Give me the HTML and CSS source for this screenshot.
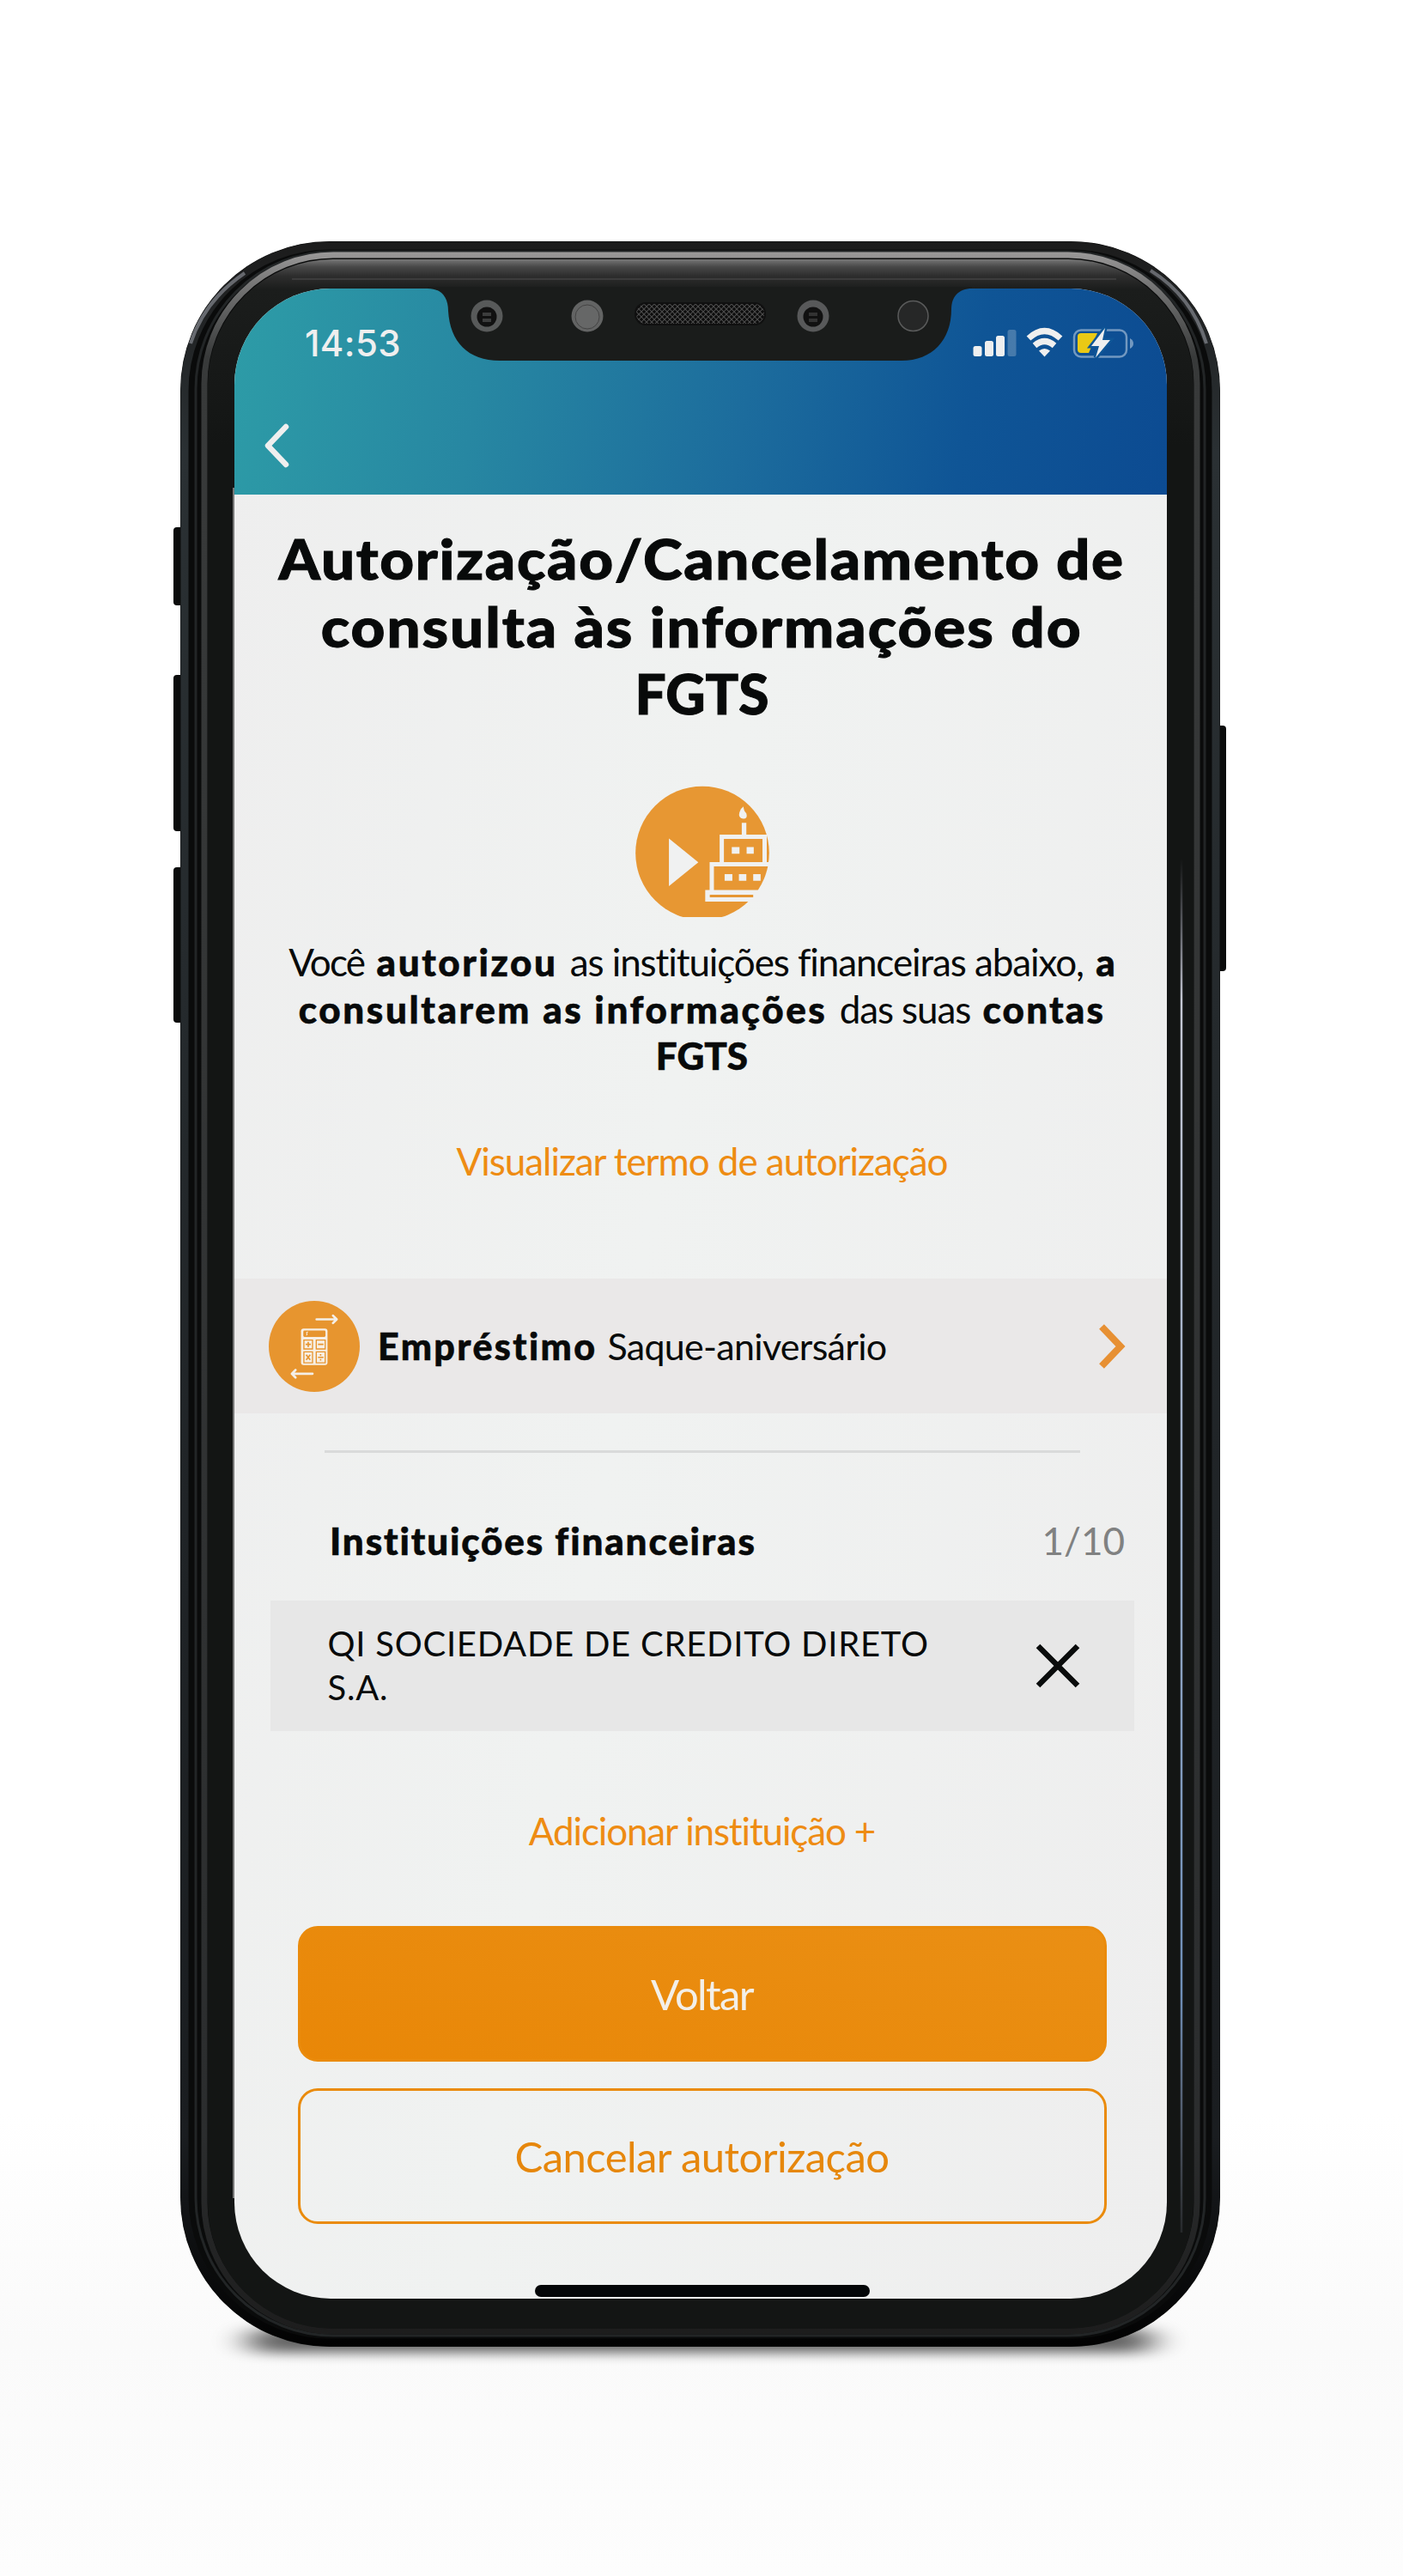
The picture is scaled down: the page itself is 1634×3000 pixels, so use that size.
FILE: index.html
```html
<!DOCTYPE html>
<html lang="pt-BR">
<head>
<meta charset="utf-8">
<title>Autorização FGTS</title>
<link rel="stylesheet" href="styles.css">
</head>
<body>
<div class="stage">
  <svg class="device" width="1634" height="3000" viewBox="0 0 1634 3000" aria-hidden="true">
    <defs>
      <linearGradient id="top" x1="0" y1="302" x2="0" y2="520" gradientUnits="userSpaceOnUse">
        <stop offset="0" stop-color="#777"/><stop offset=".04" stop-color="#484848"/><stop offset=".09" stop-color="#2d2d2d"/><stop offset=".16" stop-color="#1b1d1c"/><stop offset="1" stop-color="#131514"/>
      </linearGradient>
      <linearGradient id="rim" x1="0" y1="281" x2="0" y2="2733" gradientUnits="userSpaceOnUse">
        <stop offset="0" stop-color="#a6a4a4"/><stop offset=".02" stop-color="#777"/><stop offset=".055" stop-color="#383a3a"/><stop offset=".9" stop-color="#2b2d2e"/><stop offset="1" stop-color="#1c1c1c"/>
      </linearGradient>
      <linearGradient id="shell" x1="0" y1="281" x2="0" y2="2733" gradientUnits="userSpaceOnUse">
        <stop offset="0" stop-color="#1c1c1c"/><stop offset=".1" stop-color="#2a3033"/><stop offset=".9" stop-color="#1a1d20"/><stop offset="1" stop-color="#020202"/>
      </linearGradient>
      <linearGradient id="glint" x1="0" y1="1000" x2="0" y2="2650" gradientUnits="userSpaceOnUse">
        <stop offset="0" stop-color="#99a" stop-opacity="0"/><stop offset=".1" stop-color="#c5c8d4"/><stop offset=".8" stop-color="#6f8fb8"/><stop offset="1" stop-color="#99a" stop-opacity="0"/>
      </linearGradient>
      <pattern id="mesh" width="6" height="6" patternUnits="userSpaceOnUse"><rect width="6" height="6" fill="#0c0c0c"/><path d="M0 0L6 6M6 0L0 6" stroke="#4c4c4c" stroke-width="1.1"/></pattern>
      <filter id="soft" x="-20%" y="-200%" width="140%" height="500%"><feGaussianBlur stdDeviation="20 7"/></filter>
    </defs>
    <rect x="290" y="2712" width="1052" height="28" rx="14" fill="#000" opacity=".6" filter="url(#soft)"/>
    <g fill="#0b0c0c"><rect x="202" y="614" width="14" height="91" rx="4"/><rect x="202" y="786" width="14" height="182" rx="4"/><rect x="202" y="1010" width="14" height="181" rx="4"/><rect x="1414" y="845" width="14" height="286" rx="4"/></g>
    <rect x="210" y="281" width="1211" height="2452" rx="174" fill="#0a0b0b"/>
    <rect x="215" y="286" width="1201" height="2442" rx="169" fill="none" stroke="url(#shell)" stroke-width="9"/>
    <rect x="228" y="293" width="1175" height="2427" rx="160" fill="none" stroke="#222526" stroke-width="3"/>
    <rect x="238" y="297" width="1156" height="2418" rx="150" fill="none" stroke="url(#rim)" stroke-width="7"/>
    <rect x="242" y="302" width="1148" height="2410" rx="146" fill="url(#top)"/>
    <path d="M340 325H1300" stroke="#3c3c3c" stroke-width="2"/>
    <path d="M222 400Q238 350 285 318M1340 315Q1388 345 1405 400" fill="none" stroke="#aeb2bc" stroke-width="4" opacity=".5"/>
    <path d="M1376 1000V2600" stroke="url(#glint)" stroke-width="2.5"/>
    <path d="M272.500 568V2560" stroke="#777" stroke-width="3"/>
  </svg>

  <main class="screen">
    <header class="top">
      <div class="status">
        <span class="clock">14:53</span>
        <svg width="190" height="36" viewBox="1132 381 190 36">
          <g fill="#efefef"><rect x="1133.500" y="403" width="10" height="12" rx="2.500"/><rect x="1147" y="397" width="10" height="18" rx="2.500"/><rect x="1160" y="391" width="10" height="24" rx="2.500"/><rect x="1173.500" y="384" width="10" height="31" rx="2.500" opacity=".25"/></g>
          <g fill="none" stroke="#efefef" stroke-width="7"><path d="M1198 394Q1216.500 377 1235 394"/><path d="M1205 402.500Q1216.500 392.500 1228 402.500"/></g>
          <path d="M1210 408.500Q1216.500 403.500 1223 408.500L1216.500 415.500Z" fill="#efefef"/>
          <rect x="1251" y="384.500" width="61" height="31" rx="8" fill="none" stroke="#fff" stroke-opacity=".42" stroke-width="2.500"/>
          <path d="M1316 394Q1320 396 1320 400T1316 406Z" fill="#fff" opacity=".42"/>
          <path d="M1259 388H1278L1268 411H1259Q1255 411 1255 407V392Q1255 388 1259 388Z" fill="#eac915"/>
          <path d="M1287 382L1271 403H1280L1276 416.500L1293 396H1284Z" fill="#efefef" stroke="#0f5697" stroke-width="5" paint-order="stroke"/>
        </svg>
      </div>
      <svg class="back" width="32" height="52" viewBox="0 0 32 52"><path d="M27 4L6 26L27 48" fill="none" stroke="#efefef" stroke-width="6.500" stroke-linecap="round" stroke-linejoin="round"/></svg>
    </header>

    <h1 class="title">
      <span class="title-a">Autorização/Cancelamento de</span>
      <span class="title-b">consulta às informações do</span>
      <span>FGTS</span>
    </h1>

    <svg class="cake" width="156" height="153" viewBox="60 45 468 460">
      <circle cx="294" cy="281" r="234" fill="#e79733"/>
      <path d="M177 230L280 313L177 397Z" fill="#f0f1f1"/>
      <g fill="none" stroke="#f0f1f1" stroke-width="15"><path d="M362 320V224H512V314"/><path d="M327 415V320H530"/></g>
      <path d="M304 410H528V451H304Z" fill="#f0f1f1"/><path d="M320 431H472" stroke="#e79733" stroke-width="9"/>
      <path d="M432 220V175H448V220ZM438 118Q438 132 448 142Q454 161 437 161Q418 158 424 138Q428 124 438 118Z" fill="#f0f1f1"/>
      <path d="M397 260h27v23h-27zM449 260h25v23h-25zM372 355h27v23h-27zM422 355h26v23h-26zM472 355h26v23h-26z" fill="#f0f1f1"/>
    </svg>

    <p class="lead">
      <span class="line"><span class="voce">Você</span> <b class="wide">autorizou</b> <span class="tight">as instituições financeiras abaixo,</span> <b>a</b></span>
      <span class="line"><b class="wide">consultarem as informações</b> <span class="tight">das suas</span> <b class="contas">contas</b></span>
      <span class="line"><b>FGTS</b></span>
    </p>
    <a class="link terms">Visualizar termo de autorização</a>

    <section class="product">
      <svg width="106" height="106" viewBox="40 44 316 316">
        <circle cx="198" cy="202" r="158" fill="#e7952f"/>
        <g fill="none" stroke="#f4efe8" stroke-width="8" stroke-linecap="round" stroke-linejoin="round"><path d="M206 108H274M263 95L276 108L263 121"/><path d="M192 297H122M133 284L120 297L133 310"/></g>
        <rect x="152" y="140" width="92" height="127" rx="9" fill="#f7efe4"/>
        <rect x="160" y="147" width="77" height="22" rx="4" fill="#e7952f"/><path d="M176 152Q169 153 172 157T170 163" fill="none" stroke="#f7efe4" stroke-width="3"/>
        <g fill="none" stroke="#e7952f" stroke-width="4"><path d="M162 180h30v31h-30zM205 180h31v31h-31zM162 221h30v38h-30zM205 221h31v38h-31z"/><path d="M168 195h18M177 186v18M211 195h19M170 231l14 18M184 231l-14 18M211 240h19M220 229v5M220 246v5" stroke-width="5"/></g>
      </svg>
      <span class="product-name"><b>Empréstimo</b> <span>Saque-aniversário</span></span>
      <svg class="go" width="36" height="56" viewBox="0 0 36 56"><path d="M6 5L28 28L6 51" fill="none" stroke="#e79033" stroke-width="8"/></svg>
    </section>
    <hr class="rule">

    <div class="list-head"><b>Instituições financeiras</b><span class="count">1/10</span></div>
    <div class="bank">
      <span class="bank-name">QI SOCIEDADE DE CREDITO DIRETO<br>S.A.</span>
      <svg width="54" height="54" viewBox="0 0 54 54"><path d="M4 4L50 50M50 4L4 50" stroke="#0a0c0c" stroke-width="6.500"/></svg>
    </div>
    <a class="link add">Adicionar instituição +</a>

    <div class="actions">
      <button class="btn solid">Voltar</button>
      <button class="btn outline">Cancelar autorização</button>
    </div>
    <i class="home"></i>
  </main>

  <svg class="notch" width="634" height="90" viewBox="498 334 634 90" aria-hidden="true">
    <path d="M498 334V336C514 336 522 346 522 362C524 398 545 420 582 420H1050C1086 420 1108 396 1108 360C1108 346 1116 336 1132 336V334Z" fill="#1a1c1b"/>
    <circle cx="567" cy="368" r="18.500" fill="#585a5a"/><circle cx="567" cy="369" r="11.500" fill="#111"/><path d="M562 366H572M562 373H572" stroke="#3c3d3d" stroke-width="4"/>
    <circle cx="684" cy="368" r="18.500" fill="#636464"/><circle cx="684" cy="369" r="14" fill="#666767" stroke="#444" stroke-width="1"/>
    <circle cx="947" cy="368" r="18.500" fill="#58595a"/><circle cx="947" cy="369" r="11.500" fill="#111"/><path d="M942 366H952M942 373H952" stroke="#333" stroke-width="4"/>
    <circle cx="1063.500" cy="368" r="17.500" fill="#262727" stroke="#5a5b5b" stroke-width="1.500"/>
    <rect x="740" y="353" width="151" height="25" rx="12" fill="url(#mesh)" stroke="#101010" stroke-width="2"/>
  </svg>
</div>
</body>
</html>
```
FILE: styles.css
```css
* { box-sizing: border-box; }
body { margin: 0; background: #fff; font-family: Lato, "Open Sans", sans-serif; color: #080a0a; }
.stage { position: relative; width: 1634px; height: 3000px; padding: 336px 0 0 273px; background: linear-gradient(#fff 0, #fff 82%, #fafafa 91%, #fdfdfd 100%); }
.device { position: absolute; left: 0; top: 0; }
.screen { position: relative; width: 1086px; height: 2341px; padding-left: 3px; overflow: hidden; border-radius: 112px; display: flex; flex-direction: column; align-items: center; background: linear-gradient(100deg, #eee 0, #f0f2f1 45%, #eee 100%); }
.notch { position: absolute; left: 498px; top: 334px; }
b { font-weight: 900; -webkit-text-stroke: .6px currentColor; }
.top { width: 1086px; height: 240px; margin-left: -3px; flex: none; background: linear-gradient(100deg, #2d9ca7 0, #2787a2 27%, #1c6c9d 55%, #0f5596 78%, #0c4b92 100%); }
.status { height: 130px; padding: 45px 37px 0 82px; display: flex; justify-content: space-between; align-items: flex-start; }
.clock { font: 500 42px/38px Inter, sans-serif; letter-spacing: .4px; color: #efefef; }
.back { display: block; margin: 27px 0 0 33px; }
.title { margin: 36px 0 0; font-size: 64px; line-height: 78.5px; font-weight: 900; text-align: center; -webkit-text-stroke: 1px currentColor; }
.title span { display: block; white-space: nowrap; }
.title .title-a { letter-spacing: 1.55px; transform: scaleX(1.08); }
.title .title-b { letter-spacing: 1.8px; transform: scaleX(1.08); }
.cake { margin-top: 67.5px; flex: none; }
.lead { margin: 25px 0 0; font-size: 44px; line-height: 54.5px; text-align: center; }
.line { display: block; white-space: nowrap; word-spacing: 3px; }
.line > * { word-spacing: 0; }
.voce { letter-spacing: -1.8px; }
.wide { letter-spacing: 2.6px; }
.tight { letter-spacing: -1.1px; }
.contas { letter-spacing: 2.2px; }
.link { font-size: 44px; line-height: 55px; color: #ee8c13; white-space: nowrap; }
.terms { margin-top: 68px; letter-spacing: -1.05px; }
.product { width: 1086px; height: 157px; margin: 109.5px 0 0 -3px; padding: 0 46px 0 40px; display: flex; align-items: center; background: #eae8e8; flex: none; }
.product-name { margin-left: 21px; flex: 1; font-size: 43px; line-height: 55px; white-space: nowrap; word-spacing: 1px; }
.product-name b { letter-spacing: 2.4px; }
.product-name span { letter-spacing: -.7px; }
.rule { width: 880px; height: 3px; border: 0; margin: 43px 0 0; background: #d9dada; flex: none; }
.list-head { width: 100%; margin-top: 75px; padding: 0 49px 0 108px; display: flex; justify-content: space-between; font-size: 44px; line-height: 55px; }
.list-head b { letter-spacing: 1.85px; }
.count { color: #808181; }
.bank { width: 1006px; height: 152px; margin-top: 42px; padding: 25px 62px 0 67px; display: flex; justify-content: space-between; background: #e7e7e7; flex: none; }
.bank svg { margin-top: 24px; }
.bank-name { font-size: 40px; line-height: 51px; letter-spacing: .75px; white-space: nowrap; }
.add { margin-top: 88.5px; letter-spacing: -1.15px; }
.actions { width: 942px; margin-top: 83px; display: flex; flex-direction: column; gap: 31.5px; }
.btn { height: 158px; border-radius: 23px; font-family: inherit; font-size: 49px; border: 3px solid #ea8b0c; padding: 0; }
.solid { background: linear-gradient(15deg, #e98707, #ea8f14); color: #f3efe8; letter-spacing: -1.6px; }
.outline { background: transparent; color: #e6870c; letter-spacing: -.55px; }
.home { width: 390px; height: 14px; border-radius: 7px; margin-top: 71px; background: #040608; flex: none; }
```
